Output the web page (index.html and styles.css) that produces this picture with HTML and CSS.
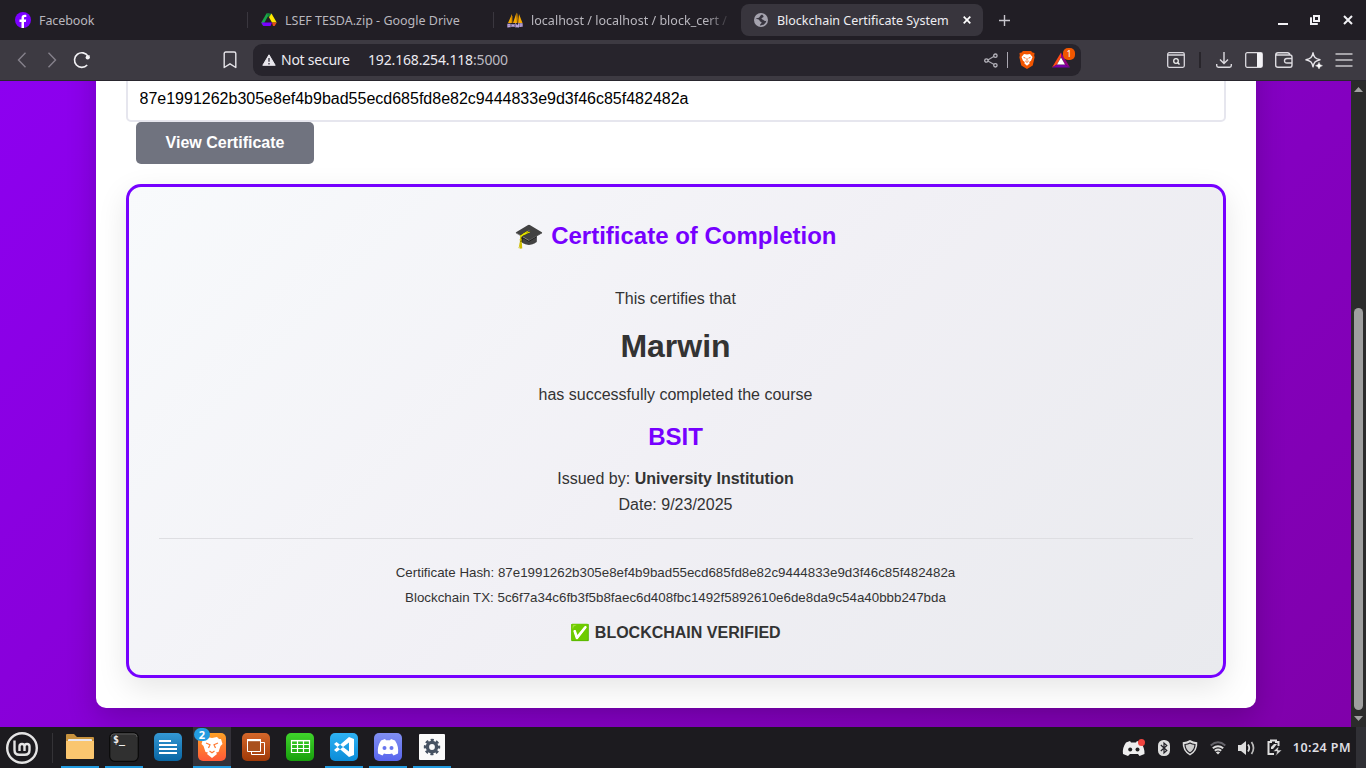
FILE: index.html
```html
<!DOCTYPE html>
<html lang="en">
<head>
<meta charset="utf-8">
<title>Blockchain Certificate System</title>
<link rel="stylesheet" href="styles.css">
</head>
<body>
<div class="desktop">
  <header class="tabs">
    <div class="tab tab-first">
      <svg width="16" height="16" viewBox="0 0 16 16"><circle cx="8" cy="8" r="8" fill="#7b00ff"/><path d="M6.500 16V10H4.500V7.500h2V6.200C6.500 3.800 7.700 2.800 9.800 2.800c.6 0 1.100.1 1.500.2v2.100H10c-.8 0-1 .4-1 1.100v1.300h2.200l-.4 2.500H9V16z" fill="#fff"/></svg>
      <span class="t-facebook">Facebook</span>
    </div>
    <div class="tab tab-drive">
      <svg width="16" height="16" viewBox="0 0 16 16"><path d="M5.500 1.500h3L3.500 10.500 1.700 13.500.300 10.500z" fill="#19a74a"/><path d="M5.500 1.500h5L8 5.500z" fill="#168737"/><path d="M8 5.200l2.500-3.700 5.200 9H11z" fill="#ffe900"/><path d="M.300 10.500H11l-1.500 3.500H2.300z" fill="#7900ff"/><path d="M11 10.500h4.700l-2 3.500H12z" fill="#e74c1b"/></svg>
      <span class="t-drive">LSEF TESDA.zip - Google Drive</span>
    </div>
    <div class="tab tab-local">
      <svg width="17" height="17" viewBox="0 0 17 17"><path d="M1 11L5 2v9zM6 11L9.500.500l.5 10.500zM11 11l1-9 3.500 9z" fill="#f5a800"/><path d="M5 4v7M10 1.500L11 11" stroke="#b87300"/><path d="M1 15.500v-3h2v2H1M5 12v3m0-1.500h2V12v3M9 15.500v-3l1.200 2 1.200-2v3M13 15v-3h2v2h-2" fill="none" stroke="#bba4dd" stroke-width="1.300"/></svg>
      <span class="t-local">localhost / localhost / block_cert /</span>
    </div>
    <div class="tab tab-active">
      <svg width="14" height="14" viewBox="0 0 14 14"><circle cx="7" cy="7" r="7" fill="#a5a3ae"/><path d="M8 1.500C6 2.200 6.200 4 4.800 4.700 3.500 5.300 2 5 1.500 6.300c2.200-.6 3.800.2 4.100 1.500.4 1.300 2 .8 2 2 0 1-1.600 1-1.700 2.700 3 .2 6-1.800 6.500-5-1 .8-2 .6-2.700-.3C9 6.400 7.700 6.600 7.500 5.600c-.1-1 1.700-.7 2-1.800C9.700 3 9 2.200 8 1.500z" fill="#38353f"/></svg>
      <span class="t-active">Blockchain Certificate System</span>
      <svg class="close" width="8" height="8" viewBox="0 0 8 8"><path d="M.7.7l6.600 6.600M7.300.7L.7 7.300" stroke="#fff" stroke-width="1.700"/></svg>
    </div>
    <svg class="newtab" width="11" height="11" viewBox="0 0 11 11"><path d="M5.500 0v11M0 5.500h11" stroke="#c8c6cd" stroke-width="1.400"/></svg>
    <div class="wincontrols">
      <svg width="10" height="10" viewBox="0 0 10 10"><path d="M0 9h10" stroke="#f2f1f5" stroke-width="2"/></svg>
      <svg width="10" height="10" viewBox="0 0 10 10"><path d="M4 1h5v5H4zM1 2.200V9h6.800" fill="none" stroke="#f2f1f5" stroke-width="2"/></svg>
      <svg width="10" height="10" viewBox="0 0 10 10"><path d="M1 1l8 8M9 1L1 9" stroke="#f2f1f5" stroke-width="2"/></svg>
    </div>
  </header>

  <nav class="toolbar">
    <svg class="back" width="10" height="16" viewBox="0 0 10 16"><path d="M8.500.800L1.500 8l7 7.200" fill="none" stroke="#85818b" stroke-width="1.400"/></svg>
    <svg class="fwd" width="10" height="16" viewBox="0 0 10 16"><path d="M1.500.800l7 7.200-7 7.200" fill="none" stroke="#85818b" stroke-width="1.400"/></svg>
    <svg class="reload" width="18" height="18" viewBox="0 0 18 18"><path d="M15 5.200A7.300 7.300 0 1 0 14.200 14" fill="none" stroke="#f3f2f5" stroke-width="1.600"/><circle cx="14.700" cy="6.500" r="2.100" fill="#f3f2f5"/><path d="M16 4v3" stroke="#f3f2f5"/></svg>
    <svg class="bookmark" width="14" height="18" viewBox="0 0 14 18"><path d="M1.200 16.500V2.600Q1.200 1 2.800 1h8.400q1.600 0 1.600 1.600v13.900L7 12.800z" fill="none" stroke="#e5e3e8" stroke-width="1.400" stroke-linejoin="round"/></svg>
    <div class="address">
      <svg width="14" height="12" viewBox="0 0 14 12"><path d="M7 .8L13.200 11.300H.8z" fill="#e9e7ed" stroke="#e9e7ed" stroke-linejoin="round"/><path d="M7 4v3.700M7 9v1.500" stroke="#4a4751" stroke-width="1.500"/></svg>
      <span class="t-secure">Not secure</span>
      <span class="t-url">192.168.254.118<i>:5000</i></span>
      <div class="address-icons">
        <svg width="14" height="15" viewBox="0 0 14 15"><path d="M3 7.500l8-4.700M3 7.500l8 4.500" stroke="#aaa8b0" stroke-width="1.200"/><g fill="#27242c" stroke="#b7b5bd" stroke-width="1.300"><circle cx="2.400" cy="7.500" r="1.700"/><circle cx="11.400" cy="2.700" r="1.700"/><circle cx="11.400" cy="12.300" r="1.700"/></g></svg>
        <span class="vline"></span>
        <svg class="lion" width="16" height="18" viewBox="0 0 16 18"><path d="M4 0h8l1.500 1.500L15.500 2l-.3 3 .5 1-2 8.500L8 18l-5.700-3.500L.3 6l.5-1-.3-3 2-.5z" fill="#f25500"/><path d="M5 3l3 .5 3-.5 2.500 3-1.500 3.800-1.700 1.200.3 1.500L8 14.700l-2.600-2.200.3-1.500L4 9.800 2.500 6z" fill="#fff"/><path d="M4.500 6.300l2 .9M11.500 6.300l-2 .9M8 7.200v2.500M6.300 10L8 11.400l1.700-1.400" stroke="#f25500" stroke-width=".9" fill="none"/></svg>
        <div class="bat">
          <svg width="18" height="16" viewBox="0 0 18 16"><path d="M9 .5L0 15.500l5-3L9 5z" fill="#ff4b17"/><path d="M0 15.500h18l-5-3H5z" fill="#7800a8"/><path d="M9 .5l9 15-5-3L9 5z" fill="#950087"/><path d="M9 5.500l4 7H5z" fill="#fff"/></svg>
          <b>1</b>
        </div>
      </div>
    </div>
    <div class="tools">
      <svg width="18" height="16" viewBox="0 0 18 16"><rect x=".7" y=".7" width="16.600" height="14.600" rx="1.500" fill="none" stroke="#dad8de" stroke-width="1.300"/><path d="M1 3h16" stroke="#dad8de" stroke-width="1.500"/><circle cx="9" cy="9" r="2.300" fill="none" stroke="#eee" stroke-width="1.300"/><path d="M10.500 10.500l2 2" stroke="#eee" stroke-width="1.400"/></svg>
      <span class="toolsep"></span>
      <svg width="16" height="16" viewBox="0 0 16 16"><path d="M8 0v11M4 7.500l4 4 4-4M.7 12v1.500q0 1.700 1.700 1.700h11.200q1.700 0 1.700-1.700V12" fill="none" stroke="#dddbe0" stroke-width="1.400"/></svg>
      <svg width="18" height="16" viewBox="0 0 18 16"><rect x=".7" y=".7" width="16.600" height="14.600" rx="1.500" fill="none" stroke="#dddbe0" stroke-width="1.300"/><path d="M12 1h5v14h-5z" fill="#f4f3f6"/></svg>
      <svg width="18" height="16" viewBox="0 0 18 16"><path d="M3 .7h9.500q2 0 2.500 2.300M3 3h12q2 0 2 2v8q0 2.300-2 2.300H3q-2.300 0-2.300-2V3Q.7.700 3 .7M1 2q.3 1 2 1M17 6.500h-5q-2.500 0-2.500 2.300T12 11h5" fill="none" stroke="#dddbe0" stroke-width="1.400"/></svg>
      <svg width="18" height="17" viewBox="0 0 18 17"><path d="M8 .8c1 4.500 2 5.700 7 7-5 1.300-6 2.500-7 7-1-4.500-2-5.700-7-7 5-1.300 6-2.500 7-7z" fill="none" stroke="#e6e4e9" stroke-width="1.400" stroke-linejoin="round"/><path d="M14 10.200q.5 3 3.500 3.500-3 .5-3.500 3.300-.5-2.800-3.500-3.300 3-.5 3.500-3.500z" fill="#fff" stroke="#fff" stroke-width=".4"/></svg>
      <svg width="18" height="14" viewBox="0 0 18 14"><path d="M.5 1h17M.5 7h17M.5 13h17" stroke="#c7c6ca" stroke-width="1.700"/></svg>
    </div>
  </nav>

  <main class="viewport">
    <div class="screen">
      <div class="page">
        <section class="container">
          <input class="hash-input" type="text" value="87e1991262b305e8ef4b9bad55ecd685fd8e82c9444833e9d3f46c85f482482a">
          <button class="btn">View Certificate</button>
          <article class="certificate">
            <h2><span class="cap">🎓</span> Certificate of Completion</h2>
            <p>This certifies that</p>
            <h1>Marwin</h1>
            <p>has successfully completed the course</p>
            <h3>BSIT</h3>
            <p>Issued by: <strong>University Institution</strong></p>
            <p>Date: 9/23/2025</p>
            <div class="proof">
              <p><small>Certificate Hash: 87e1991262b305e8ef4b9bad55ecd685fd8e82c9444833e9d3f46c85f482482a</small></p>
              <p><small>Blockchain TX: 5c6f7a34c6fb3f5b8faec6d408fbc1492f5892610e6de8da9c54a40bbb247bda</small></p>
              <p class="verified"><span class="check">✅</span> BLOCKCHAIN VERIFIED</p>
            </div>
          </article>
        </section>
      </div>
    </div>
    <div class="scrollbar">
      <svg width="9" height="5" viewBox="0 0 9 5"><path d="M4.500 0L9 5H0z" fill="#a2a2a2"/></svg>
      <span class="thumb"></span>
      <svg width="9" height="5" viewBox="0 0 9 5"><path d="M0 0h9L4.500 5z" fill="#a2a2a2"/></svg>
    </div>
  </main>

  <footer class="taskbar">
    <svg class="mint" width="34" height="34" viewBox="0 0 34 34"><circle cx="17" cy="17" r="14.800" fill="none" stroke="#e4e4e4" stroke-width="2.400"/><path d="M9.500 9.500V19q0 4.800 4.800 4.800h5.400q4.800 0 4.800-4.800v-3.500q0-2.500-2.500-2.500t-2.500 2.500V20M19.500 15.500q0-2.500-2.500-2.500t-2.500 2.500V20" fill="none" stroke="#e4e4e4" stroke-width="2.400"/></svg>
    <span class="tasksep"></span>
    <div class="apps">
      <div class="app running"><svg width="30" height="30" viewBox="0 0 30 30"><path d="M1 3q0-1 1-1h7l3 3h16q1 0 1 1v4H1z" fill="#c7923e"/><rect x="3" y="7" width="24" height="4" rx="1" fill="#e8e8ee"/><path d="M1 9h28v17q0 1-1 1H2q-1 0-1-1z" fill="#fac66f"/></svg></div>
      <div class="app running"><svg width="30" height="30" viewBox="0 0 30 30"><rect x=".7" y=".7" width="28.600" height="28.600" rx="5" fill="#303030" stroke="#090909" stroke-width="1.200"/><path d="M2 5q0-3 3-3h20q3 0 3 3" fill="none" stroke="#555"/><text x="4" y="11" class="prompt">$_</text></svg></div>
      <div class="app"><svg width="30" height="30" viewBox="0 0 30 30"><defs><linearGradient id="blue" x2="0" y2="1"><stop stop-color="#3498d4"/><stop offset="1" stop-color="#0966a3"/></linearGradient></defs><rect x="1" y="1" width="28" height="28" rx="5" fill="url(#blue)"/><path d="M6 9h12M6 13h18M6 17h18M6 21h18" stroke="#fff" stroke-width="2"/></svg></div>
      <div class="app running focused"><svg width="30" height="30" viewBox="0 0 30 30"><defs><linearGradient id="orange" x2="0" y2="1"><stop stop-color="#ffa126"/><stop offset="1" stop-color="#ff5938"/></linearGradient></defs><rect x="1" y="1" width="28" height="28" rx="5" fill="url(#orange)"/><path d="M10 5l5 1 5-1 2 2h2l1.500 5-2 2-2 6-2.500.5 1 1.500-5 4-5-4 1-1.500-2.500-.5-2-6-2-2L6 7h2z" fill="#fff"/><path d="M9 11l4 1.700-1.500 3.300M21 11l-4 1.700 1.500 3.300M12.500 19l2.500 1.800 2.500-1.800" fill="none" stroke="#ff7931" stroke-width="1.200"/></svg><b class="count">2</b></div>
      <div class="app"><svg width="30" height="30" viewBox="0 0 30 30"><defs><linearGradient id="rust" x2="0" y2="1"><stop stop-color="#d5672a"/><stop offset="1" stop-color="#9f3907"/></linearGradient></defs><rect x="1" y="1" width="28" height="28" rx="5" fill="url(#rust)"/><path d="M10.500 10.500h13v12h-13z" fill="none" stroke="#fff"/><path d="M6.500 7.500h13v12h-13z" fill="#a9501d" stroke="#fff"/><path d="M6 8.200h14" stroke="#fff" stroke-width="2"/></svg></div>
      <div class="app"><svg width="30" height="30" viewBox="0 0 30 30"><defs><linearGradient id="green" x2="0" y2="1"><stop stop-color="#3fd42b"/><stop offset="1" stop-color="#179f0c"/></linearGradient></defs><rect x="1" y="1" width="28" height="28" rx="5" fill="url(#green)"/><path d="M6.500 8.500h18v12h-18zM6.500 12.500h18M6.500 16.500h18M12.500 8.500v12M18.500 8.500v12" fill="none" stroke="#fff" stroke-width="1.200"/><path d="M6 8.700h19" stroke="#fff" stroke-width="1.500"/></svg></div>
      <div class="app running"><svg width="30" height="30" viewBox="0 0 30 30"><defs><linearGradient id="code" x2="0" y2="1"><stop stop-color="#2eb2f3"/><stop offset="1" stop-color="#0b8cd8"/></linearGradient></defs><rect x="1" y="1" width="28" height="28" rx="5" fill="url(#code)"/><path d="M20 5v5.500L7.500 20 5 18 20 5M20 25v-5.500L7.500 10 5 12 20 25" fill="#fff"/><path d="M20 5l5 2v16l-5 2z" fill="#fff"/></svg></div>
      <div class="app running"><svg width="30" height="30" viewBox="0 0 30 30"><defs><linearGradient id="discord" x2="0" y2="1"><stop stop-color="#8190f1"/><stop offset="1" stop-color="#5865ed"/></linearGradient></defs><rect x="1" y="1" width="28" height="28" rx="5" fill="url(#discord)"/><path d="M12 7l1 1.200h4L18 7l4 1.500q4 6 3 13l-4.500 2-1.500-2q-4 1-8 0l-1.500 2-4.500-2q-1-7 3-13z" fill="#fff"/><circle cx="11.500" cy="16" r="2" fill="#6876ee"/><circle cx="18.500" cy="16" r="2" fill="#6876ee"/></svg></div>
      <div class="app running"><svg width="30" height="30" viewBox="0 0 30 30"><rect x="2" y="2" width="26" height="26" rx="1" fill="#fafafa"/><circle cx="15" cy="15" r="4.600" fill="none" stroke="#465262" stroke-width="3.400"/><circle cx="15" cy="15" r="7" fill="none" stroke="#465262" stroke-width="2.400" stroke-dasharray="3.100 2.398" stroke-dashoffset="1.550"/></svg></div>
    </div>
    <div class="tray">
      <svg width="24" height="18" viewBox="0 0 24 18"><path d="M8 2l1 1.500h5L15 2l4 1.500q4 6 3.500 11.500l-5 2-1.500-2H8L6 17l-5-2Q0 9 4 3.500z" fill="#eee"/><circle cx="8.200" cy="10.500" r="2" fill="#222"/><circle cx="15.500" cy="10.500" r="2" fill="#222"/><circle cx="19.500" cy="3.500" r="3.500" fill="#f0443f"/></svg>
      <svg width="12" height="16" viewBox="0 0 12 16"><rect width="12" height="16" rx="5.500" fill="#ddd"/><path d="M2.800 5l6 5.500L6 13V3l2.800 2.500-6 5.500" fill="none" stroke="#222127" stroke-width="1.200"/></svg>
      <svg width="16" height="16" viewBox="0 0 16 16"><path d="M8 0q3 2 7.300 2.200Q16 11 8 15.500 0 11 .7 2.200 5 2 8 0z" fill="#ddd"/><path d="M8 3q2 1.300 5 1.500Q13 10 8 13 3 10 3 4.500 6 4.300 8 3z" fill="#ccc" stroke="#222127" stroke-width="1.200"/></svg>
      <svg width="16" height="14" viewBox="0 0 16 14"><path d="M.7 4.500q7.300-6.300 14.600 0" fill="none" stroke="#64636a" stroke-width="1.900"/><path d="M2.800 7.300q5.200-4.200 10.400 0M4.800 9.700q3.200-2.500 6.400 0" fill="none" stroke="#ddd" stroke-width="2"/><path d="M8 13.500L5.800 11.200q2.200-1.600 4.400 0z" fill="#ddd"/></svg>
      <svg width="17" height="16" viewBox="0 0 17 16"><path d="M0 5h3l5-4v14l-5-4H0z" fill="#ddd"/><path d="M10 4.500q2.500 3.500 0 7" fill="none" stroke="#ddd" stroke-width="1.800"/><path d="M13.500 2q4 6 0 12" fill="none" stroke="#bbb" stroke-width="1.700"/></svg>
      <svg width="15" height="17" viewBox="0 0 15 17"><path d="M7 15H1.500V3H4V1.500h5V3h2.500v4" fill="none" stroke="#ddd" stroke-width="2"/><path d="M4 8l3-3h3L6 10H4z" fill="#ddd"/><path d="M12 7L6 12.500h4L8.500 17l6.500-6h-4z" fill="#ddd" stroke="#1c1b1f" stroke-width=".6"/></svg>
      <span class="clock">10:24 PM</span>
    </div>
    <span class="corner"></span>
  </footer>
</div>
</body>
</html>
```

FILE: styles.css
```css
* { box-sizing: border-box; }
body { margin: 0; overflow: hidden; font-family: "Liberation Sans", Arial, sans-serif; }
svg { display: block; flex: none; }
.desktop { width: 1366px; height: 768px; display: flex; flex-direction: column; background: #1c1b1f; }

.tabs, .toolbar, .taskbar { font-family: "Noto Sans", "Open Sans", sans-serif; display: flex; align-items: center; flex: none; white-space: nowrap; }
.tabs { height: 40px; background: #211e25; color: #b9b7be; font-size: 12.5px; }
.tab { display: flex; align-items: center; height: 16px; }
.tab-first { width: 247px; padding-left: 15px; gap: 8px; }
.tab-drive { width: 246px; padding-left: 13px; gap: 8px; border-left: 1px solid #3a373f; }
.tab-local { width: 235px; padding-left: 13px; gap: 7px; border-left: 1px solid #3a373f; }
.t-local { overflow: hidden; width: 197px; -webkit-mask-image: linear-gradient(90deg, #000 175px, transparent 200px); mask-image: linear-gradient(90deg, #000 175px, transparent 200px); letter-spacing: .02px; }
.tab-active { margin-left: 13px; width: 242px; height: 32px; padding: 0 12px 0 13px; gap: 9px; border-radius: 8px; background: #38353d; color: #eeedf1; }
.close { margin-left: auto; }
.t-facebook { letter-spacing: -.1px; }
.t-drive { letter-spacing: 0; }
.t-active { letter-spacing: -.02px; }
.newtab { margin-left: 16px; }
.wincontrols { display: flex; gap: 22px; margin: 0 13px 0 auto; }
.wincontrols svg:nth-child(-n+2) { position: relative; left: -1px; }

.toolbar { height: 41px; background: #3d3a42; border-bottom: 1px solid #29262e; }
.back { margin-left: 17px; }
.fwd { margin-left: 20px; }
.reload { margin-left: 16px; }
.bookmark { margin-left: 132px; }
.address { display: flex; align-items: center; width: 828px; height: 32px; margin-left: 16px; padding-left: 9px; border-radius: 9px; background: #27242c; color: #eceaf0; font-size: 14px; line-height: 18px; }
.t-secure { width: 87px; margin-left: 5px; letter-spacing: -.25px; }
.t-url { letter-spacing: -.16px; }
.t-url i { font-style: normal; color: #bdbbc2; }
.address-icons { margin-left: auto; padding-right: 5px; display: flex; align-items: center; }
.vline { width: 1px; height: 16px; margin: 0 11px 0 9px; background: #aaa7b1; }
.bat { position: relative; width: 24px; margin-left: 17px; }
.bat b { position: absolute; left: 11px; top: -4px; width: 12px; height: 12px; border-radius: 5px; background: #f15600; color: #fff; font: 9px/12px "Noto Sans", sans-serif; text-align: center; }
.tools { display: flex; align-items: center; gap: 12px; margin: 0 13px 0 auto; }
.tools svg:nth-child(3) { margin-right: 1px; }
.toolsep { width: 2px; height: 16px; margin: 0 3px 0 2px; background: #28252b; }

.viewport { height: 646px; display: flex; flex: none; overflow: hidden; }
.screen { width: 1351px; height: 646px; display: flex; flex-direction: column; justify-content: flex-end; overflow: hidden; }
.page { flex: none; height: 987px; padding: 20px 95.5px 19px; display: flex; background: linear-gradient(135deg, #8f00fc 0%, #8000aa 100%); }
.container { width: 1160px; padding: 30px 30px 29.700px; border-radius: 10px; background: #fff; box-shadow: 0 10px 30px rgba(0,0,0,.2); display: flex; flex-direction: column; justify-content: flex-end; align-items: flex-start; line-height: 1.6; color: #333; }
.hash-input { width: 100%; height: 46px; padding: 12px 12px; border: 2px solid #e6e6ee; border-radius: 5px; font: 16px "Liberation Sans", Arial, sans-serif; color: #000; background: #fff; }
.btn { height: 42px; width: 178px; margin: 0 10px; padding: 0 0 0 1px; border: 0; border-radius: 5px; background: #70737f; color: #fff; font: bold 16px "Liberation Sans", Arial, sans-serif; }
.certificate { width: 100%; margin-top: 20px; padding: 30px; border: 3px solid #7600ff; border-radius: 15px; background: linear-gradient(135deg, #f8fafc, #f1f0f5 50%, #e9eaee); box-shadow: 0 10px 30px rgba(0,0,0,.1); text-align: center; }
.certificate p { margin: 0; }
.certificate h2 { margin: 0 0 30.200px; font-size: 24px; color: #7600ff; }
.certificate h1 { margin: 9.800px 0 10px; font-size: 32px; }
.certificate h3 { margin: 10px 0; font-size: 24px; color: #7600ff; }
.cap { filter: hue-rotate(14deg) saturate(1.9); }
.check { filter: hue-rotate(-4deg) saturate(1.9) brightness(1.05); }
.proof { margin-top: 20px; padding-top: 20px; border-top: 1px solid #dedee2; }
.proof .verified { margin-top: 10px; font-weight: bold; }
.scrollbar { width: 15px; display: flex; flex-direction: column; align-items: center; padding: 6px 0 6px; background: #2b2b2b; }
.thumb { width: 9px; height: 402px; margin: auto 0 6px; border-radius: 5px; background: #9f9f9f; }

.taskbar { height: 41px; background: #1c1b1f; }
.mint { margin-left: 5px; }
.tasksep { width: 1px; height: 30px; margin-left: 13px; background: #343337; }
.apps { display: flex; gap: 6px; margin-left: 8px; height: 41px; }
.app { position: relative; display: flex; justify-content: center; align-items: flex-start; width: 38px; height: 41px; padding-top: 5px; }
.running { border-bottom: 2px solid #219be0; }
.focused { background: #343239; }
.count { position: absolute; left: 1px; top: 1px; width: 16px; height: 13px; border-radius: 8px; background: #239ce0; color: #fff; font: bold 11px/13px "Noto Sans", sans-serif; text-align: center; }
.prompt { font: bold 10px "DejaVu Sans Mono", monospace; fill: #eee; }
.tray { margin-left: auto; display: flex; align-items: center; gap: 12px; }
.clock { margin-left: -1px; font-size: 12.500px; letter-spacing: .45px; font-weight: 600; color: #dedee2; }
.corner { width: 10px; height: 41px; margin-left: 5px; background: #303035; }
```
